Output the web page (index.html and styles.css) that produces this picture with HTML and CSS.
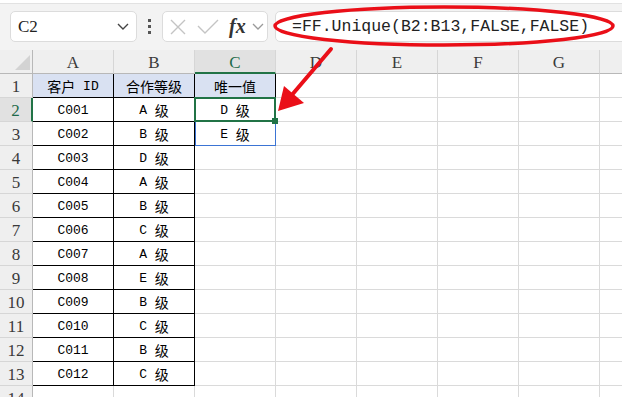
FILE: index.html
```html
<!DOCTYPE html>
<html lang="zh-CN">
<head>
    <meta charset="UTF-8">
    <title>FF.Unique</title>
    <link rel="stylesheet" href="styles.css">
</head>
<body>
<div class="titlebar"></div>
<div class="toolbar">
    <div class="namebox">
        <span class="cellref">C2</span>
        <svg class="chev" width="12" height="7" viewBox="0 0 12 7"><path d="M1 1 L6 6 L11 1" fill="none" stroke="#444" stroke-width="1.4"/></svg>
    </div>
    <div class="dots"><i></i><i></i><i></i></div>
    <div class="fxbox">
        <svg width="16" height="16" viewBox="0 0 16 16"><path d="M1 1 L15 15 M15 1 L1 15" stroke="#c4c4c4" stroke-width="1.4"/></svg>
        <svg class="ok" width="22" height="15" viewBox="0 0 22 15"><path d="M1 7 L8 14 L21 1" fill="none" stroke="#c4c4c4" stroke-width="1.4"/></svg>
        <span class="fx">fx</span>
        <svg class="chev2" width="12" height="7" viewBox="0 0 12 7"><path d="M1 1 L6 6 L11 1" fill="none" stroke="#9a9a9a" stroke-width="1.3"/></svg>
    </div>
    <div class="formula">=FF.Unique(B2:B13,FALSE,FALSE)</div>
</div>
<div class="sheet" id="sheet"></div>

<svg class="markup" width="622" height="397" viewBox="0 0 622 397">
    <ellipse cx="444" cy="26" rx="169" ry="19" fill="none" stroke="#ea0f18" stroke-width="3.5"/>
    <line x1="331" y1="49" x2="291" y2="96" stroke="#ea0f18" stroke-width="4" stroke-linecap="round"/>
    <polygon points="278,111 284,86 304,103" fill="#ea0f18"/>
</svg>

<script>
    // last column only shows its left edge, so it has no letter
    var cols = ['A', 'B', 'C', 'D', 'E', 'F', 'G', ''];
    var ids = ['C001', 'C002', 'C003', 'C004', 'C005', 'C006', 'C007', 'C008', 'C009', 'C010', 'C011', 'C012'];
    var grades = ['A', 'B', 'D', 'A', 'B', 'C', 'A', 'E', 'B', 'C', 'B', 'C'];
    var titles = ['<span class="zh">客户</span> ID', '<span class="zh">合作等级</span>', '<span class="zh">唯一值</span>'];
    var sheet = document.getElementById('sheet');

    function cell(cls, html) {
        var d = document.createElement('div');
        d.className = 'cell ' + cls;
        d.innerHTML = html || '';
        sheet.appendChild(d);
        return d;
    }

    cell('corner');
    cols.forEach(function (c) {
        cell('colhead' + (c === 'C' ? ' active' : ''), c);
    });

    for (var r = 1; r <= 14; r++) {
        cell('rowhead' + (r === 2 ? ' active' : ''), r);
        for (var i = 0; i < cols.length; i++) {
            if (r === 1 && i < 3) {
                cell('boxed title', titles[i]);
            } else if (r > 1 && r <= 13 && i < 2) {
                cell('boxed', i === 0 ? ids[r - 2] : grades[r - 2] + ' <span class="zh">级</span>');
            } else if (r === 2 && i === 2) {
                cell('sel', 'D <span class="zh">级</span>');
            } else if (r === 3 && i === 2) {
                cell('spill', 'E <span class="zh">级</span>');
            } else {
                cell('');
            }
        }
    }
</script>
</body>
</html>
```

FILE: styles.css
```css
body {
    margin: 0;
    width: 622px;
    height: 397px;
    overflow: hidden;
    position: relative;
    background: #fff;
    font-family: "Liberation Sans", Arial, sans-serif;
}
.titlebar {
    height: 3px;
    background: #fff;
    border-bottom: 1px solid #e2e2e2;
}
.toolbar {
    height: 46px;
    box-sizing: border-box;
    padding-top: 7px;
    background: #f3f3f3;
    display: flex;
    align-items: flex-start;
    white-space: nowrap;
}
.toolbar > * {
    flex: none;
}
.namebox, .fxbox, .formula {
    height: 31px;
    box-sizing: border-box;
    background: #fff;
    border: 1px solid #dcdcdc;
    border-radius: 5px;
    display: flex;
    align-items: center;
}
.namebox {
    margin-left: 10px;
    width: 127px;
    padding: 0 7px 0 7px;
    justify-content: space-between;
}
.cellref {
    font-family: "Liberation Serif", serif;
    font-size: 17px;
    color: #222;
}
.dots {
    width: 25px;
    height: 31px;
    display: flex;
    flex-direction: column;
    align-items: center;
    justify-content: center;
    gap: 3px;
}
.dots i {
    width: 3px;
    height: 3px;
    background: #555;
}
.fxbox {
    width: 106px;
    padding-left: 7px;
}
.fxbox .ok {
    margin-left: 11px;
}
.fx {
    margin-left: 10px;
    font-family: "Liberation Serif", serif;
    font-style: italic;
    font-weight: bold;
    font-size: 20px;
    color: #333;
}
.chev2 {
    margin-left: 6px;
}
.formula {
    margin-left: 7px;
    width: 400px;
    padding-left: 16px;
    font-family: "Liberation Mono", monospace;
    font-size: 16.5px;
    color: #222;
}

.sheet {
    display: grid;
    grid-template-columns: 33px repeat(8, 81px);
    grid-auto-rows: 24px;
}
.cell {
    box-sizing: border-box;
    border-right: 1px solid #dadada;
    border-bottom: 1px solid #dadada;
    display: flex;
    align-items: center;
    justify-content: center;
    padding-top: 2px;
    line-height: 1;
    font-family: "Liberation Mono", monospace;
    font-size: 13px;
    color: #000;
    white-space: pre;
}
.zh {
    font-family: "Noto Sans CJK SC", sans-serif;
    font-size: 14px;
    position: relative;
    top: -1px;
}
.corner, .colhead, .rowhead {
    background: #efefef;
    font-family: "Liberation Serif", serif;
    font-size: 17px;
    color: #3a3a3a;
}
.corner {
    position: relative;
    border-right-color: #b8b8b8;
    border-bottom-color: #b8b8b8;
}
.corner::after {
    content: "";
    position: absolute;
    left: 15px;
    top: 5px;
    width: 15px;
    height: 15px;
    background: #d3d3d3;
    clip-path: polygon(100% 0, 100% 100%, 0 100%);
}
.colhead {
    border-right-color: #d6d6d6;
    border-bottom-color: #b8b8b8;
}
.rowhead {
    border-right-color: #b8b8b8;
    border-bottom-color: #d6d6d6;
}
.colhead.active {
    background: #e1e1e1;
    border-bottom: 2px solid #217346;
    color: #1d6a4a;
}
.rowhead.active {
    background: #e1e1e1;
    border-right: 2px solid #217346;
    color: #1d6a4a;
}
.boxed {
    border-right-color: #000;
    border-bottom-color: #000;
}
.title {
    background: #d9e1f2;
}
.sel, .spill {
    position: relative;
}
.sel::before {
    content: "";
    position: absolute;
    left: -1px;
    top: -1px;
    right: -1px;
    bottom: -1px;
    border: 2px solid #217346;
}
.sel::after {
    content: "";
    position: absolute;
    right: -3px;
    bottom: -3px;
    width: 6px;
    height: 6px;
    background: #217346;
    z-index: 1;
}
.spill::before {
    content: "";
    position: absolute;
    left: 0;
    top: 0;
    right: -1px;
    bottom: -1px;
    border: 1px solid #3b74d4;
    border-top: none;
}
.markup {
    position: absolute;
    left: 0;
    top: 0;
    pointer-events: none;
}
```
